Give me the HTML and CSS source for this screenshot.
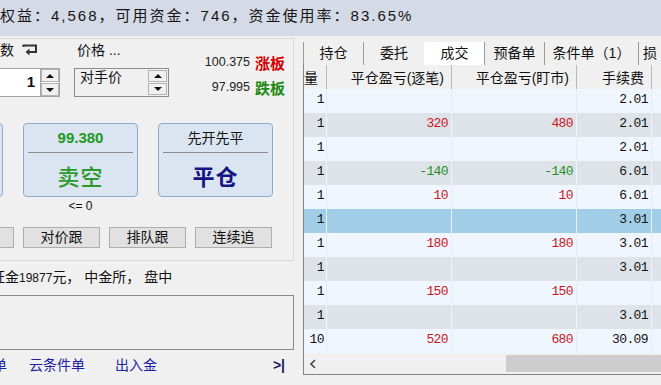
FILE: index.html
```html
<!DOCTYPE html>
<html lang="zh-CN">
<head>
<meta charset="utf-8">
<title>交易面板</title>
<link rel="stylesheet" href="styles.css">
</head>
<body>
<div class="topbar">权益：4,568，可用资金：746，资金使用率：83.65%</div>
<div class="main">
  <div class="left">
    <div class="order-box">
      <div class="row-inputs">
        <div class="field qty">
          <div class="label">手数<svg class="ret" width="16" height="12" viewBox="0 0 16 12"><path d="M1.5 3V1.5h12.5v6.5H7" fill="none" stroke="#333" stroke-width="2"/><path d="M7.5 4.5L3.5 8l4 3.5z" fill="#333"/></svg></div>
          <div class="spin">
            <div class="qty-input">1</div>
            <div class="sbtns"><span class="sb up"></span><span class="sb dn"></span></div>
          </div>
        </div>
        <div class="field price">
          <div class="label">价格 ...</div>
          <div class="combo">
            <span class="combo-text">对手价</span>
            <div class="sbtns inner"><span class="sb up"></span><span class="sb dn"></span></div>
          </div>
        </div>
        <div class="limits">
          <div class="lim"><span class="num">100.375</span><b class="up-lim">涨板</b></div>
          <div class="lim"><span class="num">97.995</span><b class="dn-lim">跌板</b></div>
        </div>
      </div>
      <div class="bigbtns">
        <div class="bigbtn"><div class="bb-top"></div><div class="bb-div"></div><div class="bb-main"></div></div>
        <div class="bigbtn"><div class="bb-top price-green">99.380</div><div class="bb-div"></div><div class="bb-main sell">卖空</div></div>
        <div class="bigbtn"><div class="bb-top">先开先平</div><div class="bb-div"></div><div class="bb-main close">平仓</div></div>
      </div>
      <div class="hint-row"><span class="hint">&lt;= 0</span></div>
      <div class="smallbtns">
        <span class="sbtn">超价跟</span>
        <span class="sbtn">对价跟</span>
        <span class="sbtn">排队跟</span>
        <span class="sbtn">连续追</span>
      </div>
    </div>
    <div class="info">证金<span class="info-num">19877</span>元， 中金所， 盘中</div>
    <div class="msgbox"></div>
    <div class="links">
      <span class="link l1">单</span>
      <span class="link l2">云条件单</span>
      <span class="link l3">出入金</span>
      <span class="collapse">&gt;|</span>
    </div>
  </div>
  <div class="right">
    <div class="tabs">
      <span class="tab w60">持仓</span>
      <span class="tab w61">委托</span>
      <span class="tab w60 sel">成交</span>
      <span class="tab w60">预备单</span>
      <span class="tab w94">条件单（1）</span>
      <span class="tab w60 last">损</span>
    </div>
    <div class="grid">
      <div class="hrow">
        <span class="c c1 left-al">量</span>
        <span class="c c2">平仓盈亏(逐笔)</span>
        <span class="c c3">平仓盈亏(盯市)</span>
        <span class="c c4">手续费</span>
        <span class="c c5"></span>
      </div>
      <div class="drow lt"><span class="c c1">1</span><span class="c c2"></span><span class="c c3"></span><span class="c c4">2.01</span><span class="c c5"></span></div>
      <div class="drow dk"><span class="c c1">1</span><span class="c c2 red">320</span><span class="c c3 red">480</span><span class="c c4">2.01</span><span class="c c5"></span></div>
      <div class="drow lt"><span class="c c1">1</span><span class="c c2"></span><span class="c c3"></span><span class="c c4">2.01</span><span class="c c5"></span></div>
      <div class="drow dk"><span class="c c1">1</span><span class="c c2 grn">-140</span><span class="c c3 grn">-140</span><span class="c c4">6.01</span><span class="c c5"></span></div>
      <div class="drow lt"><span class="c c1">1</span><span class="c c2 red">10</span><span class="c c3 red">10</span><span class="c c4">6.01</span><span class="c c5"></span></div>
      <div class="drow selrow"><span class="c c1">1</span><span class="c c2"></span><span class="c c3"></span><span class="c c4">3.01</span><span class="c c5"></span></div>
      <div class="drow lt"><span class="c c1">1</span><span class="c c2 red">180</span><span class="c c3 red">180</span><span class="c c4">3.01</span><span class="c c5"></span></div>
      <div class="drow dk"><span class="c c1">1</span><span class="c c2"></span><span class="c c3"></span><span class="c c4">3.01</span><span class="c c5"></span></div>
      <div class="drow lt"><span class="c c1">1</span><span class="c c2 red">150</span><span class="c c3 red">150</span><span class="c c4"></span><span class="c c5"></span></div>
      <div class="drow dk"><span class="c c1">1</span><span class="c c2"></span><span class="c c3"></span><span class="c c4">3.01</span><span class="c c5"></span></div>
      <div class="drow lt"><span class="c c1">10</span><span class="c c2 red">520</span><span class="c c3 red">680</span><span class="c c4">30.09</span><span class="c c5"></span></div>
      <div class="hscroll">
        <span class="sarrow"><svg width="8" height="10" viewBox="0 0 8 10"><path d="M6 1L2 5l4 4" fill="none" stroke="#444" stroke-width="1.6"/></svg></span>
        <span class="track"><span class="thumb"></span></span>
      </div>
    </div>
  </div>
</div>
</body>
</html>
```

FILE: styles.css
```css
* { box-sizing: border-box; margin: 0; padding: 0; }
html, body { width: 661px; height: 385px; overflow: hidden; }
body {
  background: #f0f0f0;
  font-family: "Liberation Sans", "Noto Sans CJK SC", sans-serif;
  font-size: 14px;
  color: #111;
}
.topbar {
  height: 36px;
  background: #d5dae7;
  line-height: 32px;
  font-size: 15px;
  letter-spacing: 2px;
  padding-left: 0;
  white-space: nowrap;
  color: #151515;
}
.main { display: flex; height: 349px; }
.left { flex: none; width: 414px; margin-left: -120px; }

.order-box {
  margin-top: 2px;
  height: 223px;
  border: 1px solid #d9d9d9;
}
.row-inputs { display: flex; height: 58px; }
.field { display: flex; flex-direction: column; }
.label {
  margin-top: 1px;
  height: 20px;
  line-height: 20px;
  display: flex;
  align-items: center;
  white-space: nowrap;
}
.qty { margin-left: 59px; width: 120px; }
.qty .label { padding-left: 46px; }
.ret { margin-left: 8px; }
.spin { margin-top: 8px; height: 29px; display: flex; }
.qty-input {
  width: 100px;
  background: #fff;
  border: 1px solid #a5a5a5;
  border-right: none;
  text-align: right;
  padding-right: 5px;
  font-weight: bold;
  font-size: 15px;
  line-height: 26px;
}
.sbtns { width: 20px; display: flex; flex-direction: column; gap: 1px; border: 1px solid #a5a5a5; background: #fff; }
.sb {
  flex: 1;
  border: 1px solid #b4b4b4;
  background: #f0f0f0;
  display: flex;
  align-items: center;
  justify-content: center;
}
.sb.up::before {
  content: "";
  border-left: 4px solid transparent;
  border-right: 4px solid transparent;
  border-bottom: 4px solid #111;
}
.sb.dn::before {
  content: "";
  border-left: 4px solid transparent;
  border-right: 4px solid transparent;
  border-top: 4px solid #111;
}
.price { margin-left: 14px; width: 95px; }
.price .label { padding-left: 3px; }
.combo {
  margin-top: 8px;
  height: 29px;
  border: 1px solid #8c8c8c;
  display: flex;
  background: #f0f0f0;
}
.combo-text { flex: 1; padding: 0 0 0 5px; line-height: 17px; }
.sbtns.inner { border: none; background: #f0f0f0; padding: 1px 1px 1px 0; gap: 1px; }

.limits {
  margin-left: auto;
  padding-right: 8px;
  padding-top: 13px;
  display: flex;
  flex-direction: column;
  align-items: flex-end;
  gap: 5px;
}
.lim { height: 20px; display: flex; align-items: center; gap: 5px; }
.num { font-size: 12.5px; color: #222; }
.up-lim { color: #d30000; font-size: 15px; }
.dn-lim { color: #1e8a12; font-size: 15px; }

.bigbtns { margin-top: 26px; margin-left: 7px; display: flex; gap: 20px; }
.bigbtn {
  width: 115px;
  height: 74px;
  border: 1px solid #8eaacb;
  border-radius: 4px;
  background: #dbe5f2;
  display: flex;
  flex-direction: column;
}
.bb-top { height: 28px; line-height: 28px; text-align: center; font-size: 14px; color: #111; }
.price-green { color: #21991f; font-weight: bold; font-size: 15px; }
.bb-div { height: 1px; background: #8a8a8a; margin: 0 4px; }
.bb-main { flex: 1; display: flex; align-items: center; justify-content: center; font-size: 22px; font-weight: 500; letter-spacing: 1px; }
.sell { color: #2c9a2a; }
.close { color: #141482; font-weight: bold; }
.hint-row { margin-left: 142px; width: 115px; height: 18px; line-height: 18px; text-align: center; font-size: 12px; }

.smallbtns { margin-top: 12px; margin-left: 56px; display: flex; gap: 9px; }
.sbtn {
  width: 77px;
  height: 21px;
  line-height: 19px;
  border: 1px solid #adadad;
  background: #e1e1e1;
  text-align: center;
  font-size: 14px;
}

.info {
  margin-top: 6px;
  height: 20px;
  line-height: 20px;
  padding-left: 111px;
  white-space: nowrap;
}
.info-num { font-size: 12px; }
.msgbox { margin-top: 8px; height: 55px; border: 1px solid #8a8a8a; }
.links {
  margin-top: 5px;
  height: 20px;
  line-height: 20px;
  display: flex;
  padding-left: 113px;
  padding-right: 9px;
  white-space: nowrap;
}
.link { color: #1d1da6; }
.l2 { margin-left: 22px; }
.l3 { margin-left: 30px; }
.collapse { margin-left: auto; color: #1a1a5a; font-weight: bold; font-size: 14px; }

.right { flex: none; width: 420px; margin-left: 9px; }
.tabs { margin-top: 6px; height: 23px; display: flex; }
.tab {
  border-left: 1px solid #9a9a9a;
  text-align: center;
  line-height: 23px;
  white-space: nowrap;
}
.tab.sel { background: #fff; border-left-color: #fff; }
.w60 { width: 60px; }
.w61 { width: 61px; }
.w94 { width: 94px; }
.tab.last { text-align: left; padding-left: 4px; }

.grid { border-left: 1px solid #848484; border-bottom: 1px solid #848484; }
.hrow { height: 24px; display: flex; line-height: 26px; }
.c { flex: none; text-align: right; white-space: nowrap; overflow: hidden; }
.c1 { width: 23px; padding-right: 2px; }
.c2, .c3 { width: 125px; }
.c4 { width: 75px; }
.c5 { width: 120px; }
.hrow .c { border-right: 1px solid #b9b9b9; padding-right: 7px; }
.hrow .c1 { padding-right: 0; text-align: left; }
.drow {
  height: 24px;
  display: flex;
  line-height: 22px;
  font-family: "Liberation Mono", "Noto Sans CJK SC", monospace;
  font-size: 13px;
  letter-spacing: -0.6px;
  color: #111;
}
.drow .c { border-right: 1px solid #e6ebf2; padding-right: 3px; }
.drow .c1 { padding-right: 2px; }
.lt { background: #f0f6fd; }
.dk { background: #dee3ea; }
.dk .c { border-right-color: #f2f5f9; }
.selrow { background: #a2cde7; }
.selrow .c { border-right-color: #e6f0f8; }
.red { color: #c8161d; }
.grn { color: #22901f; }
.hscroll { height: 21px; display: flex; background: #f0f0f0; }
.sarrow { width: 17px; display: flex; align-items: center; justify-content: center; }
.track { flex: 1; display: flex; padding: 2px 0; }
.thumb { margin-left: 185px; flex: 1; background: #cdcdcd; }
```
